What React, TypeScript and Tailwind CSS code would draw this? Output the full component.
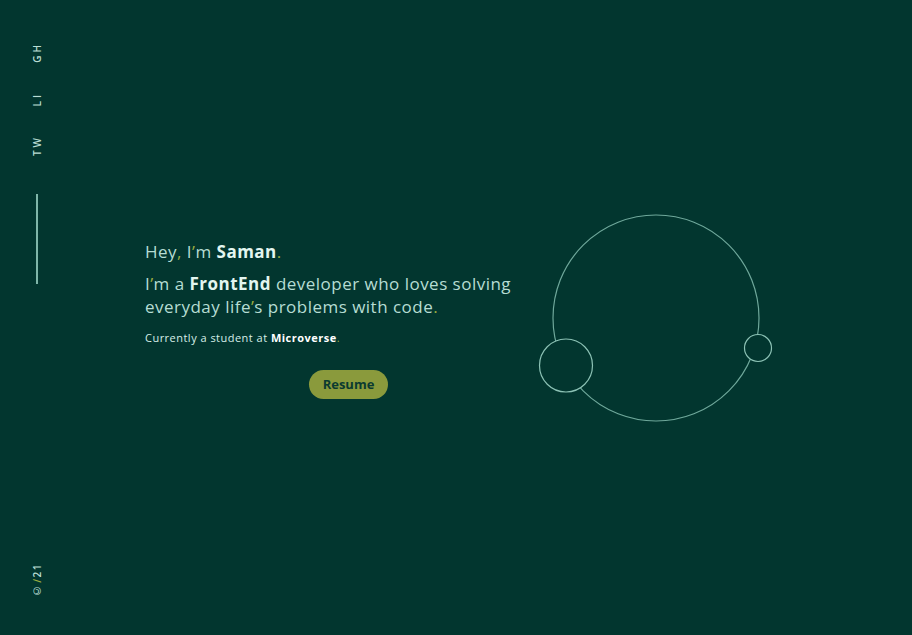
import React from "react";

const font = { fontFamily: '"Open Sans", "Noto Sans", sans-serif' };

function SideLink({ label }: { label: string }) {
	return (
		<span className="rotate-180 whitespace-nowrap text-[10px] font-semibold tracking-[0.3em] text-[#b9ddd4] [writing-mode:vertical-rl]">
			{label}
		</span>
	);
}

function Orbit() {
	return (
		<svg width="240" height="220" viewBox="0 0 240 220" className="shrink-0">
			<circle cx="120" cy="110" r="103" fill="none" stroke="#6fa89b" strokeWidth="1.2" />
			<circle cx="30" cy="157.5" r="26.5" fill="#02362f" stroke="#8cc2b5" strokeWidth="1.2" />
			<circle cx="222" cy="140" r="13.5" fill="#02362f" stroke="#8cc2b5" strokeWidth="1.2" />
		</svg>
	);
}

export default function App() {
	return (
		<div style={font} className="flex h-[635px] w-full bg-[#02362f] text-[#b6ddd3]">
			<aside className="flex w-[74px] shrink-0 flex-col items-center pt-[42px] pb-[37px]">
				<div className="flex flex-col items-center gap-[29px]">
					<SideLink label="GH" />
					<SideLink label="LI" />
					<SideLink label="TW" />
				</div>
				<div className="mt-[38px] h-[90px] w-[2px] bg-[#7fb6a9]" />
				<span className="mt-auto rotate-180 whitespace-nowrap text-[10px] font-semibold tracking-[0.15em] text-[#b9ddd4] [writing-mode:vertical-rl]">
					©<span className="text-[#9aab3f]">/</span>21
				</span>
			</aside>
			<main className="flex flex-1 items-center pl-[71px]">
				<div className="w-[391px] shrink-0 pt-[4px] tracking-[0.03em]">
					<p className="text-[17px] leading-[24px]">
						Hey<span className="text-[#9aab3f]">,</span> I<span className="text-[#9aab3f]">’</span>m{" "}
						<b className="font-bold text-[#e3f6f0]">Saman</b>
						<span className="text-[#9aab3f]">.</span>
					</p>
					<p className="mt-[8px] text-[17px] leading-[23px]">
						I<span className="text-[#9aab3f]">’</span>m a{" "}
						<b className="font-bold text-[#e3f6f0]">FrontEnd</b> developer who loves solving everyday life
						<span className="text-[#9aab3f]">’</span>s problems with code
						<span className="text-[#9aab3f]">.</span>
					</p>
					<p className="mt-[12px] text-[11px] leading-[16px] text-[#d6eee8]">
						Currently a student at <b className="font-bold text-white">Microverse</b>
						<span className="text-[#9aab3f]">.</span>
					</p>
					<div className="mt-[24px] pl-[164px]">
						<button className="h-[29px] w-[79px] rounded-full bg-[#8a9a3c] text-[13px] font-bold tracking-normal text-[#0b3a30]">
							Resume
						</button>
					</div>
				</div>
				<Orbit />
			</main>
		</div>
	);
}
